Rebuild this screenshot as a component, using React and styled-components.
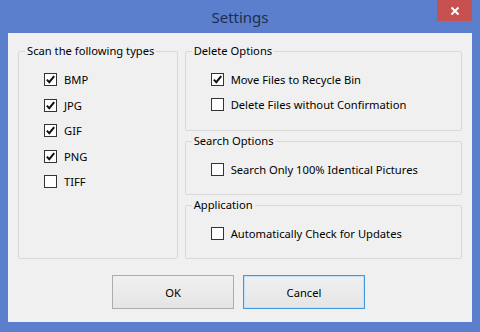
import React from 'react';
import styled, { createGlobalStyle } from 'styled-components';

const Global = createGlobalStyle`
  html, body { margin: 0; padding: 0; }
  body { background: #5b7fcc; }
`;

const Window = styled.div`
  width: 480px;
  height: 332px;
  box-sizing: border-box;
  background: #5b7fcc;
  display: flex;
  flex-direction: column;
  font-family: 'Noto Sans', 'Open Sans', sans-serif;
  font-size: 11.2px;
  color: #000;
`;

const TitleBar = styled.div`
  height: 33px;
  flex: none;
  display: flex;
  align-items: center;
  justify-content: center;
  position: relative;
`;

const Title = styled.div`
  font-size: 15px;
  color: #1f2d4f;
  margin-top: 1px;
`;

const CloseButton = styled.div`
  position: absolute;
  top: 0;
  right: 8px;
  width: 35px;
  height: 21px;
  background: #c75050;
  display: flex;
  align-items: center;
  justify-content: center;
`;

const Client = styled.div`
  flex: 1;
  margin: 0 8px 10px;
  background: #f0f0f0;
  padding: 11px 10px 13px 10px;
  display: flex;
  flex-direction: column;
`;

const Groups = styled.div`
  display: flex;
  gap: 7px;
  height: 215px;
`;

const Column = styled.div`
  display: flex;
  flex-direction: column;
  gap: 3px;
  width: ${p => p.$width}px;
`;

const Group = styled.fieldset`
  margin: 0;
  border: 1px solid #d9d9d9;
  border-radius: 2px;
  padding: 0;
  box-sizing: border-box;
  height: ${p => (p.$height ? `${p.$height}px` : '100%')};
  min-width: 0;
`;

const Legend = styled.legend`
  padding: 0 2px;
  margin-left: 6px;
  line-height: 14px;
  color: #000;
  white-space: nowrap;
`;

const Options = styled.div`
  display: flex;
  flex-direction: column;
  gap: ${p => p.$gap || 0}px;
  padding: 9px 0 0 25px;
`;

const Row = styled.label`
  display: flex;
  align-items: center;
  height: 25px;
  gap: 7px;
  flex: none;
`;

const Box = styled.span`
  width: 11px;
  height: 11px;
  border: 1px solid #333;
  background: #fff;
  display: flex;
  align-items: center;
  justify-content: center;
  flex: none;
`;

const Buttons = styled.div`
  display: flex;
  justify-content: center;
  gap: 9px;
  margin-top: 16px;
  padding-right: 3px;
`;

const Button = styled.div`
  width: 122px;
  height: 34px;
  box-sizing: border-box;
  border: 1px solid ${p => (p.$focused ? '#3c9ae0' : '#acacac')};
  background: linear-gradient(#f0f0f0, #e5e5e5);
  display: flex;
  align-items: center;
  justify-content: center;
  box-shadow: ${p => (p.$focused ? 'inset 0 0 0 1px #c2e0f7' : 'none')};
`;

function Check() {
  return (
    <svg width="11" height="11" viewBox="0 0 11 11">
      <path d="M1.8 5.6 L4.3 8.2 L9.2 2.2" fill="none" stroke="#111" strokeWidth="2" />
    </svg>
  );
}

function Checkbox({ checked, children }) {
  return (
    <Row>
      <Box>{checked && <Check />}</Box>
      <span>{children}</span>
    </Row>
  );
}

export default function App() {
  return (
    <Window>
      <Global />
      <TitleBar>
        <Title>Settings</Title>
        <CloseButton>
          <svg width="10" height="10" viewBox="0 0 10 10">
            <path d="M1.5 1.5 L8.5 8.5 M8.5 1.5 L1.5 8.5" stroke="#fff" strokeWidth="2" />
          </svg>
        </CloseButton>
      </TitleBar>
      <Client>
        <Groups>
          <Column $width={160}>
            <Group>
              <Legend>Scan the following types</Legend>
              <Options $gap={0.5}>
                <Checkbox checked>BMP</Checkbox>
                <Checkbox checked>JPG</Checkbox>
                <Checkbox checked>GIF</Checkbox>
                <Checkbox checked>PNG</Checkbox>
                <Checkbox>TIFF</Checkbox>
              </Options>
            </Group>
          </Column>
          <Column $width={278}>
            <Group $height={87}>
              <Legend>Delete Options</Legend>
              <Options>
                <Checkbox checked>Move Files to Recycle Bin</Checkbox>
                <Checkbox>Delete Files without Confirmation</Checkbox>
              </Options>
            </Group>
            <Group $height={61}>
              <Legend>Search Options</Legend>
              <Options>
                <Checkbox>Search Only 100% Identical Pictures</Checkbox>
              </Options>
            </Group>
            <Group $height={61}>
              <Legend>Application</Legend>
              <Options $gap={0}>
                <Checkbox>Automatically Check for Updates</Checkbox>
              </Options>
            </Group>
          </Column>
        </Groups>
        <Buttons>
          <Button>OK</Button>
          <Button $focused>Cancel</Button>
        </Buttons>
      </Client>
    </Window>
  );
}
